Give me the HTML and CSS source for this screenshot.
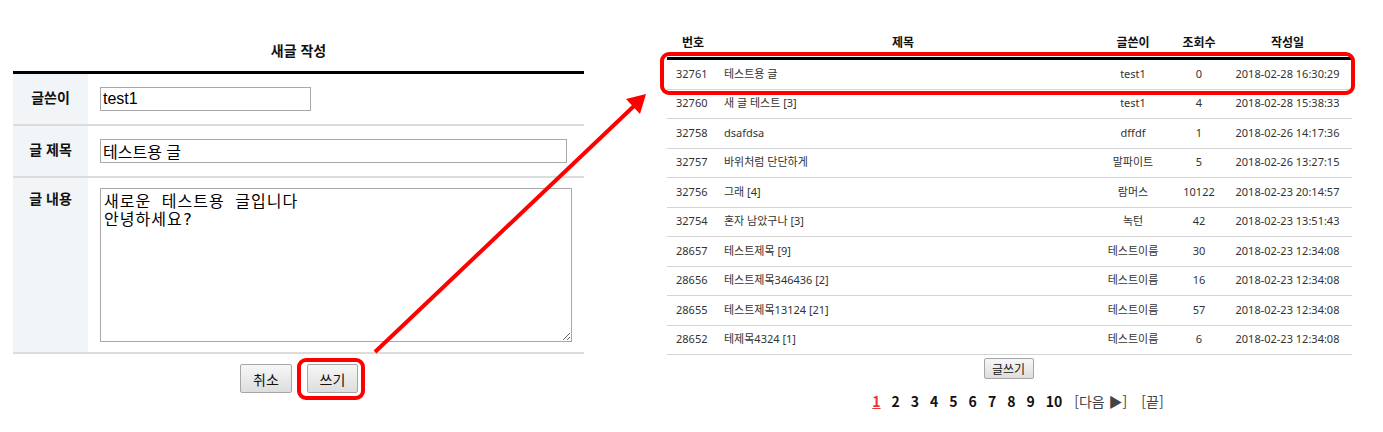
FILE: index.html
```html
<!DOCTYPE html>
<html lang="ko">
<head>
<meta charset="utf-8">
<title>새글 작성</title>
<link rel="stylesheet" href="styles.css">
</head>
<body>
<div class="page">
  <section class="write">
    <h2 class="write-title">새글 작성</h2>
    <div class="form">
      <div class="frow r1">
        <div class="flabel">글쓴이</div>
        <div class="fcell"><input class="in-writer" type="text" value="test1"></div>
      </div>
      <div class="frow r2">
        <div class="flabel">글 제목</div>
        <div class="fcell"><input class="in-title" type="text" value="테스트용 글"></div>
      </div>
      <div class="frow r3">
        <div class="flabel top">글 내용</div>
        <div class="fcell top"><textarea class="in-body">새로운 테스트용 글입니다
안녕하세요?</textarea></div>
      </div>
    </div>
    <div class="form-actions">
      <button class="btn btn-cancel" type="button">취소</button>
      <span class="mark mark-btn"><button class="btn btn-write" type="button">쓰기</button></span>
    </div>
  </section>

  <section class="list">
    <div class="thead">
      <div class="c c1">번호</div>
      <div class="c c2">제목</div>
      <div class="c c3">글쓴이</div>
      <div class="c c4">조회수</div>
      <div class="c c5">작성일</div>
    </div>
    <div class="tbody">
      <div class="trow mark mark-row"><div class="c c1 num">32761</div><div class="c c2 subj">테스트용 글</div><div class="c c3">test1</div><div class="c c4">0</div><div class="c c5">2018-02-28 16:30:29</div></div>
      <div class="trow"><div class="c c1 num">32760</div><div class="c c2 subj">새 글 테스트 [3]</div><div class="c c3">test1</div><div class="c c4">4</div><div class="c c5">2018-02-28 15:38:33</div></div>
      <div class="trow"><div class="c c1 num">32758</div><div class="c c2 subj">dsafdsa</div><div class="c c3">dffdf</div><div class="c c4">1</div><div class="c c5">2018-02-26 14:17:36</div></div>
      <div class="trow"><div class="c c1 num">32757</div><div class="c c2 subj">바위처럼 단단하게</div><div class="c c3">말파이트</div><div class="c c4">5</div><div class="c c5">2018-02-26 13:27:15</div></div>
      <div class="trow"><div class="c c1 num">32756</div><div class="c c2 subj">그래 [4]</div><div class="c c3">람머스</div><div class="c c4">10122</div><div class="c c5">2018-02-23 20:14:57</div></div>
      <div class="trow"><div class="c c1 num">32754</div><div class="c c2 subj">혼자 남았구나 [3]</div><div class="c c3">녹턴</div><div class="c c4">42</div><div class="c c5">2018-02-23 13:51:43</div></div>
      <div class="trow"><div class="c c1 num">28657</div><div class="c c2 subj">테스트제목 [9]</div><div class="c c3">테스트이름</div><div class="c c4">30</div><div class="c c5">2018-02-23 12:34:08</div></div>
      <div class="trow"><div class="c c1 num">28656</div><div class="c c2 subj">테스트제목346436 [2]</div><div class="c c3">테스트이름</div><div class="c c4">16</div><div class="c c5">2018-02-23 12:34:08</div></div>
      <div class="trow"><div class="c c1 num">28655</div><div class="c c2 subj">테스트제목13124 [21]</div><div class="c c3">테스트이름</div><div class="c c4">57</div><div class="c c5">2018-02-23 12:34:08</div></div>
      <div class="trow"><div class="c c1 num">28652</div><div class="c c2 subj">테제목4324 [1]</div><div class="c c3">테스트이름</div><div class="c c4">6</div><div class="c c5">2018-02-23 12:34:08</div></div>
    </div>
    <div class="list-actions"><button class="btn btn-small" type="button">글쓰기</button></div>
    <div class="pager">
      <a class="pg cur">1</a><a class="pg">2</a><a class="pg">3</a><a class="pg">4</a><a class="pg">5</a><a class="pg">6</a><a class="pg">7</a><a class="pg">8</a><a class="pg">9</a><a class="pg">10</a>
      <span class="pg-nav">[다음 ▶]</span><span class="pg-nav">[끝]</span>
    </div>
  </section>
</div>
<svg class="arrow" width="1383" height="432" viewBox="0 0 1383 432">
  <line x1="375" y1="352" x2="634" y2="106" stroke="#ff0000" stroke-width="4"/>
  <polygon points="646,94 640,114 626,99" fill="#ff0000"/>
</svg>
</body>
</html>
```

FILE: styles.css
```css
* { box-sizing: border-box; }
html, body { margin: 0; padding: 0; background: #fff; }
body {
  font-family: "Noto Sans", "Noto Sans CJK KR", sans-serif;
  color: #222;
  width: 1383px;
  height: 432px;
  overflow: hidden;
  position: relative;
}
.page {
  display: flex;
  align-items: flex-start;
  padding-left: 13px;
  gap: 83px;
}

/* ---------- write form ---------- */
.write { width: 571px; }
.write-title {
  margin: 0;
  padding-top: 40px;
  height: 71px;
  line-height: 20px;
  font-size: 14px;
  font-weight: bold;
  text-align: center;
  font-family: "Noto Sans CJK KR", sans-serif;
  color: #111;
}
.form { border-top: 3px solid #000; }
.frow {
  display: grid;
  grid-template-columns: 75px 1fr;
  border-bottom: 2px solid #dcdcdc;
}
.r1, .r2 { height: 52px; }
.r3 { height: 176px; }
.flabel {
  background: #f2f5f7;
  font-family: "Noto Sans CJK KR", sans-serif;
  font-weight: bold;
  font-size: 14px;
  color: #111;
  display: flex;
  align-items: center;
  justify-content: center;
  padding-bottom: 4px;
}
.flabel.top { align-items: flex-start; padding-top: 10px; }
.fcell {
  display: flex;
  align-items: center;
  padding-left: 12px;
}
.fcell.top { align-items: flex-start; padding-top: 10px; }
input, textarea {
  border: 1px solid #a9a9a9;
  margin: 0;
  color: #000;
  outline: none;
}
.in-writer, .in-title {
  height: 24px;
  font-family: "Liberation Sans", "Noto Sans CJK KR", sans-serif;
  font-size: 16px;
  padding: 0 2px;
}
.in-writer { width: 211px; }
.in-title { width: 467px; }
.in-body {
  width: 472px;
  height: 154px;
  font-family: "DejaVu Sans Mono", "Noto Sans CJK KR", monospace;
  font-size: 16px;
  line-height: 18px;
  letter-spacing: 1px;
  padding: 4px 3px;
  resize: vertical;
}
.form-actions {
  display: flex;
  justify-content: center;
  gap: 15px;
  padding-top: 10px;
  padding-left: 1px;
}
.btn {
  font-family: "Noto Sans CJK KR", sans-serif;
  color: #111;
  background: linear-gradient(#f7f7f7, #dddddd);
  border: 1px solid #a6a6a6;
  border-radius: 2px;
  padding: 0;
  margin: 0;
}
.btn-cancel, .btn-write { height: 29px; font-size: 14px; }
.btn-cancel { width: 52px; }
.btn-write { width: 51px; }

/* annotation highlight boxes */
.mark { position: relative; display: block; }
.mark::after {
  content: "";
  position: absolute;
  border: 4px solid #ff0000;
  border-radius: 9px;
  pointer-events: none;
}
.mark-btn::after { left: -10px; right: -7px; top: -6px; bottom: -7px; }
.mark-row::after { left: -7px; right: -3px; top: -8px; bottom: -6px; }

/* ---------- list ---------- */
.list { width: 685px; padding-top: 32px; }
.thead, .trow {
  display: grid;
  grid-template-columns: 52px 372px 84px 48px 129px;
}
.thead {
  font-family: "Noto Sans CJK KR", sans-serif;
  font-weight: bold;
  font-size: 12px;
  line-height: 20px;
  height: 28px;
  padding-bottom: 5px;
  border-bottom: 3px solid #000;
  color: #111;
}
.trow {
  height: 29.5px;
  border-bottom: 1px solid #d4d4d4;
  font-size: 11px;
  color: #333;
  align-items: center;
}
.trow .c { line-height: 16px; padding-bottom: 1px; }
.c { text-align: center; white-space: nowrap; }
.thead .c2 { padding-right: 4px; }
.c.num { text-align: left; padding-left: 9px; }
.c.subj { text-align: left; padding-left: 5px; }

.list-actions {
  display: flex;
  justify-content: center;
  padding-top: 3px;
  padding-right: 2px;
}
.btn-small {
  width: 50px;
  height: 21px;
  font-size: 12px;
}
.pager {
  display: flex;
  justify-content: center;
  align-items: center;
  padding-top: 12px;
  padding-left: 17px;
  font-family: "Noto Sans CJK KR", sans-serif;
  font-size: 14px;
  line-height: 20px;
}
.pg {
  font-weight: bold;
  color: #111;
  margin-right: 11px;
}
.pg.cur { color: #ee3333; text-decoration: underline; }
.pg-nav { color: #444; margin-left: 1px; margin-right: 13px; }
.pg-nav:last-child { margin-right: 0; }

.arrow {
  position: absolute;
  left: 0;
  top: 0;
  pointer-events: none;
}
```
